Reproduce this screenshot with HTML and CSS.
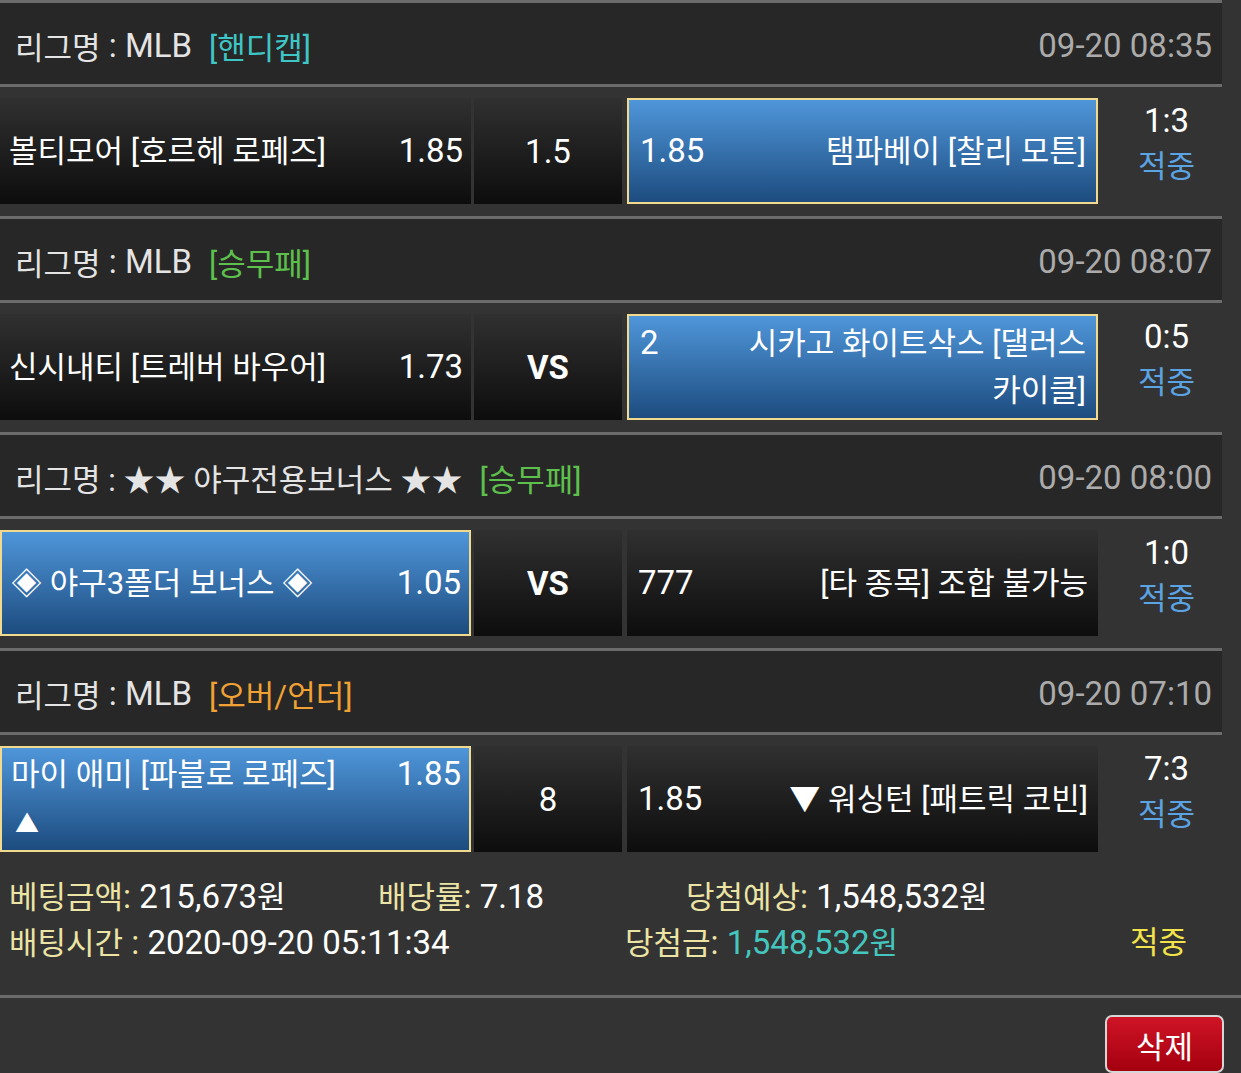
FILE: index.html
```html
<!DOCTYPE html>
<html lang="ko">
<head>
<meta charset="utf-8">
<title>배팅내역</title>
<link rel="stylesheet" href="styles.css">
</head>
<body>
<div class="slip">
  <div class="game">
    <div class="league"><span class="k">리그명</span> : MLB<span class="tag cyan k">[핸디캡]</span><span class="time">09-20 08:35</span></div>
    <div class="match">
      <div class="cell home"><div class="in"><span class="odds">1.85</span><span class="k">볼티모어 [호르헤 로페즈]</span></div></div>
      <div class="cell mid">1.5</div>
      <div class="cell away sel"><div class="in"><span class="odds">1.85</span><span class="k">탬파베이 [찰리 모튼]</span></div></div>
      <div class="score"><div>1:3</div><div class="hit k">적중</div></div>
    </div>
  </div>
  <div class="game">
    <div class="league"><span class="k">리그명</span> : MLB<span class="tag green k">[승무패]</span><span class="time">09-20 08:07</span></div>
    <div class="match">
      <div class="cell home"><div class="in"><span class="odds">1.73</span><span class="k">신시내티 [트레버 바우어]</span></div></div>
      <div class="cell mid vs">VS</div>
      <div class="cell away sel"><div class="in"><span class="odds">2</span><span class="k">시카고 화이트삭스 [댈러스 카이클]</span></div></div>
      <div class="score"><div>0:5</div><div class="hit k">적중</div></div>
    </div>
  </div>
  <div class="game">
    <div class="league"><span class="k">리그명 : ★★ 야구전용보너스 ★★</span><span class="tag green k">[승무패]</span><span class="time">09-20 08:00</span></div>
    <div class="match">
      <div class="cell home sel"><div class="in"><span class="odds">1.05</span><span class="k">◈ 야구3폴더 보너스 ◈</span></div></div>
      <div class="cell mid vs">VS</div>
      <div class="cell away"><div class="in"><span class="odds">777</span><span class="k">[타 종목] 조합 불가능</span></div></div>
      <div class="score"><div>1:0</div><div class="hit k">적중</div></div>
    </div>
  </div>
  <div class="game">
    <div class="league"><span class="k">리그명</span> : MLB<span class="tag orange k">[오버/언더]</span><span class="time">09-20 07:10</span></div>
    <div class="match">
      <div class="cell home sel"><div class="in"><span class="odds">1.85</span><span class="k">마이 애미 [파블로 로페즈]</span><br><span class="tri">▲</span></div></div>
      <div class="cell mid">8</div>
      <div class="cell away"><div class="in"><span class="odds">1.85</span><span class="k">▼ 워싱턴 [패트릭 코빈]</span></div></div>
      <div class="score"><div>7:3</div><div class="hit k">적중</div></div>
    </div>
  </div>
</div>
<div class="summary">
  <div class="srow">
    <span class="c1"><span class="lb k">베팅금액</span><span class="lb">:</span> 215,673<span class="k">원</span></span>
    <span class="c2"><span class="lb k">배당률</span><span class="lb">:</span> 7.18</span>
    <span class="c3"><span class="lb k">당첨예상</span><span class="lb">:</span> 1,548,532<span class="k">원</span></span>
  </div>
  <div class="srow">
    <span class="w1"><span class="lb k">배팅시간</span><span class="lb"> :</span> 2020-09-20 05:11:34</span>
    <span class="w2"><span class="lb k">당첨금</span><span class="lb">:</span> <span class="win">1,548,532<span class="k">원</span></span></span>
    <span class="result k">적중</span>
  </div>
</div>
<div class="actions">
  <button class="del" type="button">삭제</button>
</div>
</body>
</html>
```
FILE: styles.css
```css
html, body {
  margin: 0;
  padding: 0;
}
body {
  background: #333333;
  color: #ffffff;
  font-family: Roboto, "Noto Sans CJK KR", sans-serif;
  font-size: 33px;
  width: 1241px;
  overflow: hidden;
}
.k {
  font-size: 31px;
}
.slip {
  width: 1222px;
}
.league {
  height: 78px;
  padding: 3px 10px 0 15px;
  background: #272727;
  border-top: 3px solid #6b6b6b;
  border-bottom: 3px solid #6b6b6b;
  display: flex;
  align-items: center;
  color: #e4e4e4;
  white-space: pre;
}
.tag {
  margin-left: 17px;
}
.cyan { color: #3ec6c6; }
.green { color: #5ec04c; }
.orange { color: #f0a133; }
.time {
  margin-left: auto;
  color: #ababab;
}
.match {
  display: flex;
  height: 106px;
  padding: 11px 0 12px;
}
.cell {
  box-sizing: border-box;
  height: 106px;
  display: flex;
  align-items: center;
  background: linear-gradient(#303030, #0d0d0d);
}
.home {
  width: 471px;
  padding: 0 8px 0 9px;
}
.mid {
  width: 148px;
  margin-left: 3px;
  justify-content: center;
}
.vs {
  font-weight: 700;
}
.away {
  width: 471px;
  margin-left: 5px;
  padding: 0 10px 0 11px;
}
.sel {
  background: linear-gradient(#4f96da, #1d4c7f);
  border: 2px solid #f1d98e;
}
.in {
  width: 100%;
  line-height: 46px;
}
.home .odds {
  float: right;
  width: 90px;
  text-align: right;
}
.away .in {
  text-align: right;
}
.away .odds {
  float: left;
  width: 90px;
  text-align: left;
}
.tri {
  font-size: 24px;
  padding-left: 4px;
}
.score {
  box-sizing: border-box;
  width: 124px;
  padding-left: 13px;
  text-align: center;
  line-height: 46px;
}
.hit {
  color: #5ba3e2;
}
.summary {
  padding: 10px 0 29px 9px;
  border-bottom: 3px solid #6b6b6b;
  line-height: 45px;
}
.srow {
  display: flex;
  white-space: pre;
}
.c1 { width: 369px; }
.c2 { width: 308px; }
.w1 { width: 616px; }
.w2 { width: 505px; }
.lb {
  color: #ece4a4;
}
.win {
  color: #44c6bf;
}
.result {
  color: #f2e34a;
}
.actions {
  display: flex;
  justify-content: flex-end;
  padding: 17px 17px 0 0;
}
.del {
  width: 119px;
  height: 58px;
  border: 2px solid #d6d6d6;
  border-radius: 7px;
  background: linear-gradient(#cf1426, #a4000f);
  color: #ffffff;
  font-family: Roboto, "Noto Sans CJK KR", sans-serif;
  font-size: 31px;
  padding: 0;
}
```
